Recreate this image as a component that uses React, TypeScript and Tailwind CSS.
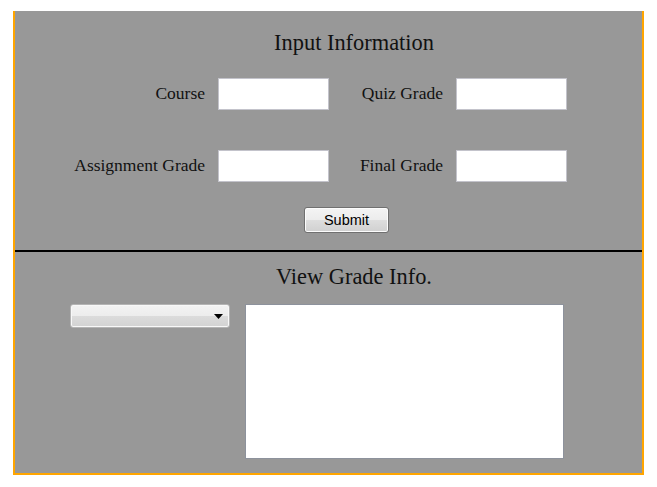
import * as React from "react";

const serif = "font-['Liberation_Serif','Times_New_Roman',serif] text-[#111]";

const Field = ({ label, id }: { label: string; id: string }) => (
  <>
    <label htmlFor={id} className="mb-[3px] text-right text-[17.5px] leading-[22px]">
      {label}
    </label>
    <input
      id={id}
      type="text"
      className="h-[32px] w-[111px] border border-[#c3c3cb] bg-white outline-none"
    />
  </>
);

export default function App() {
  return (
    <div className="min-h-[487px] bg-white pl-[13px] pt-[11px]">
      <div
        className={`flex h-[464px] w-[631px] flex-col border-x-2 border-b-2 border-[#ffa500] bg-[#989898] ${serif}`}
      >
        {/* input section */}
        <div className="h-[241px] border-b-2 border-black">
          <div className="ml-[139px] w-[400px] pt-[19px] text-center text-[22.4px] leading-[26px]">
            Input Information
          </div>

          <div className="mt-[22px] grid grid-cols-[190px_111px_101px_111px] items-center gap-x-[13px] gap-y-[40px]">
            <Field label="Course" id="course" />
            <Field label="Quiz Grade" id="quiz" />
            <Field label="Assignment Grade" id="assignment" />
            <Field label="Final Grade" id="final" />
          </div>

          <button
            type="button"
            className="ml-[289px] mt-[25px] h-[26px] w-[85px] rounded-[3px] border border-[#707070] bg-[linear-gradient(to_bottom,#f4f4f4_0%,#ececec_50%,#dedede_50%,#d0d0d0_100%)] font-['Liberation_Sans',Arial,sans-serif] text-[14.5px] leading-none text-black shadow-[inset_0_0_0_1px_#fcfcfc]"
          >
            Submit
          </button>
        </div>

        {/* view section */}
        <div className="flex-1">
          <div className="ml-[139px] w-[400px] pt-[12px] text-center text-[22.4px] leading-[26px]">
            View Grade Info.
          </div>

          <div className="ml-[55px] mt-[14px] flex items-start gap-[15px]">
            <div className="relative h-[24px] w-[160px]">
              <select className="h-full w-full appearance-none rounded-[3px] border border-[#b4b4b4] bg-[linear-gradient(to_bottom,#f3f3f3_0%,#ededed_50%,#dcdcdc_50%,#d2d2d2_100%)] shadow-[inset_0_0_0_1px_#f8f8f8] outline-none" />
              <svg
                className="pointer-events-none absolute right-[7px] top-[10px]"
                width="9"
                height="5"
                viewBox="0 0 9 5"
              >
                <path d="M0 0H9L4.5 5Z" fill="#000" />
              </svg>
            </div>
            <textarea className="h-[155px] w-[319px] resize-none border border-[#8d929c] bg-white outline-none" />
          </div>
        </div>
      </div>
    </div>
  );
}
